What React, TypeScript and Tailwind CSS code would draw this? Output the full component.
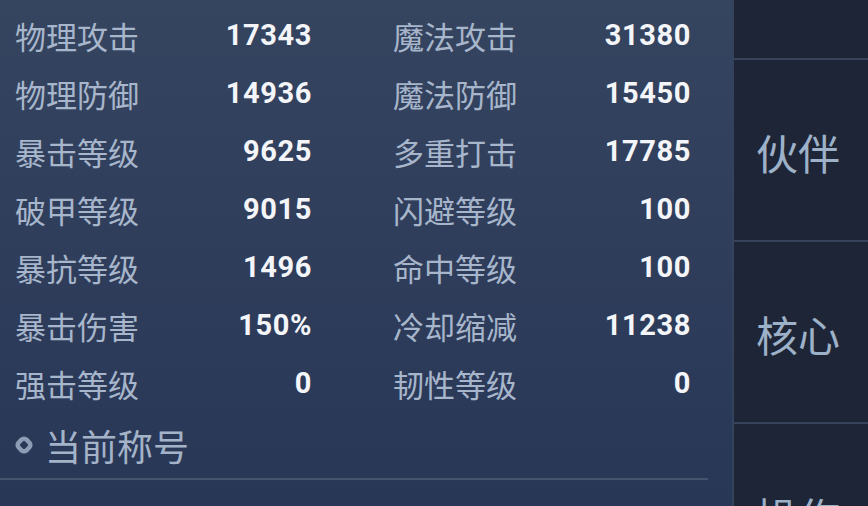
import React from 'react'

const stats: [string, string, string, string][] = [
  ['物理攻击', '17343', '魔法攻击', '31380'],
  ['物理防御', '14936', '魔法防御', '15450'],
  ['暴击等级', '9625', '多重打击', '17785'],
  ['破甲等级', '9015', '闪避等级', '100'],
  ['暴抗等级', '1496', '命中等级', '100'],
  ['暴击伤害', '150%', '冷却缩减', '11238'],
  ['强击等级', '0', '韧性等级', '0'],
]

const cjk = { fontFamily: '"Noto Sans CJK SC", "Noto Sans", sans-serif' }
const num = { fontFamily: 'Roboto, "Liberation Sans", sans-serif' }

function StatCell({ label, value }: { label: string; value: string }) {
  return (
    <div className="flex items-center justify-between">
      <span className="text-[31px] leading-none text-[#a7b6cb]" style={cjk}>
        {label}
      </span>
      <span className="text-[29px] font-bold leading-none text-[#f3f5f9] tracking-[0.6px]" style={num}>
        {value}
      </span>
    </div>
  )
}

function Tab({ label }: { label: string }) {
  return (
    <div className="flex h-[182px] shrink-0 items-center justify-center border-b-2 border-[#37435a] pr-[6px] pt-[4px]">
      <span className="text-[42px] leading-none text-[#9db1c8]" style={cjk}>
        {label}
      </span>
    </div>
  )
}

export default function App() {
  return (
    <div className="flex h-[506px] w-[868px] overflow-hidden bg-[#1d2536]">
      {/* stats panel */}
      <div className="flex w-[732px] shrink-0 flex-col bg-gradient-to-b from-[#35445f] to-[#293757] pt-[6px]">
        <div className="flex flex-col pl-[15px]">
          {stats.map(([l1, v1, l2, v2]) => (
            <div key={l1} className="grid h-[58px] grid-cols-[297px_298px] items-center gap-x-[81px]">
              <StatCell label={l1} value={v1} />
              <StatCell label={l2} value={v2} />
            </div>
          ))}
        </div>
        <div className="flex h-[66px] items-center gap-[10px] pl-[13px]">
          <svg width="22" height="22" viewBox="0 0 22 22" className="shrink-0">
            <rect x="5.5" y="5.5" width="11" height="11" rx="3.5" transform="rotate(45 11 11)" fill="none" stroke="#8c9db5" strokeWidth="4.5" />
          </svg>
          <span className="text-[36px] leading-none text-[#a4b3c8]" style={cjk}>
            当前称号
          </span>
        </div>
        <div className="h-[2px] w-[708px] bg-[#46546e]" />
      </div>

      {/* side tabs */}
      <div className="flex flex-1 flex-col border-l-2 border-[#34425b] bg-[#1d2536]">
        <div className="h-[60px] shrink-0 border-b-2 border-[#37435a]" />
        <Tab label="伙伴" />
        <Tab label="核心" />
        <Tab label="操作" />
      </div>
    </div>
  )
}
